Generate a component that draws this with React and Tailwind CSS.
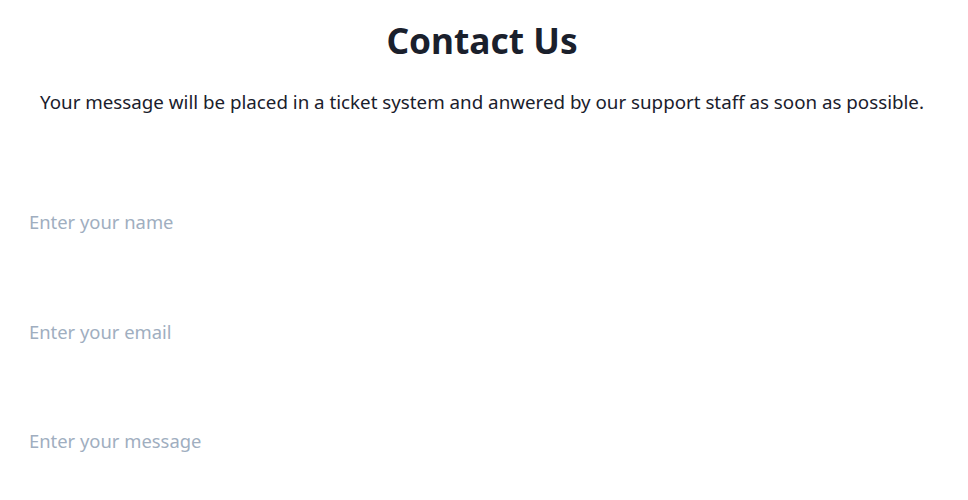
export default function App() {
  return (
    <div className="min-h-screen w-full bg-white pl-4 pr-[20px]" style={{ fontFamily: '"Noto Sans", "Open Sans", sans-serif' }}>
      <h1 className="pt-5 text-center text-[35.3px] leading-[40px] font-bold text-[#1a202c]">Contact Us</h1>
      <p className="mt-[28px] text-center text-[18.75px] leading-[27px] text-[#1a202c]">
        Your message will be placed in a ticket system and anwered by our support staff as soon as possible.
      </p>
      <form className="mt-[81px] flex flex-col gap-[60px]">
        <input className="h-[50px] w-full px-[13px] text-[18.4px] text-[#1a202c] outline-none placeholder:text-[#a0aec0]" placeholder="Enter your name" />
        <input className="h-[50px] w-full px-[13px] text-[18.4px] text-[#1a202c] outline-none placeholder:text-[#a0aec0]" placeholder="Enter your email" />
        <textarea className="h-[50px] w-full resize-none px-[13px] py-[11px] text-[18.4px] leading-[27px] text-[#1a202c] outline-none placeholder:text-[#a0aec0]" placeholder="Enter your message" />
      </form>
    </div>
  );
}
